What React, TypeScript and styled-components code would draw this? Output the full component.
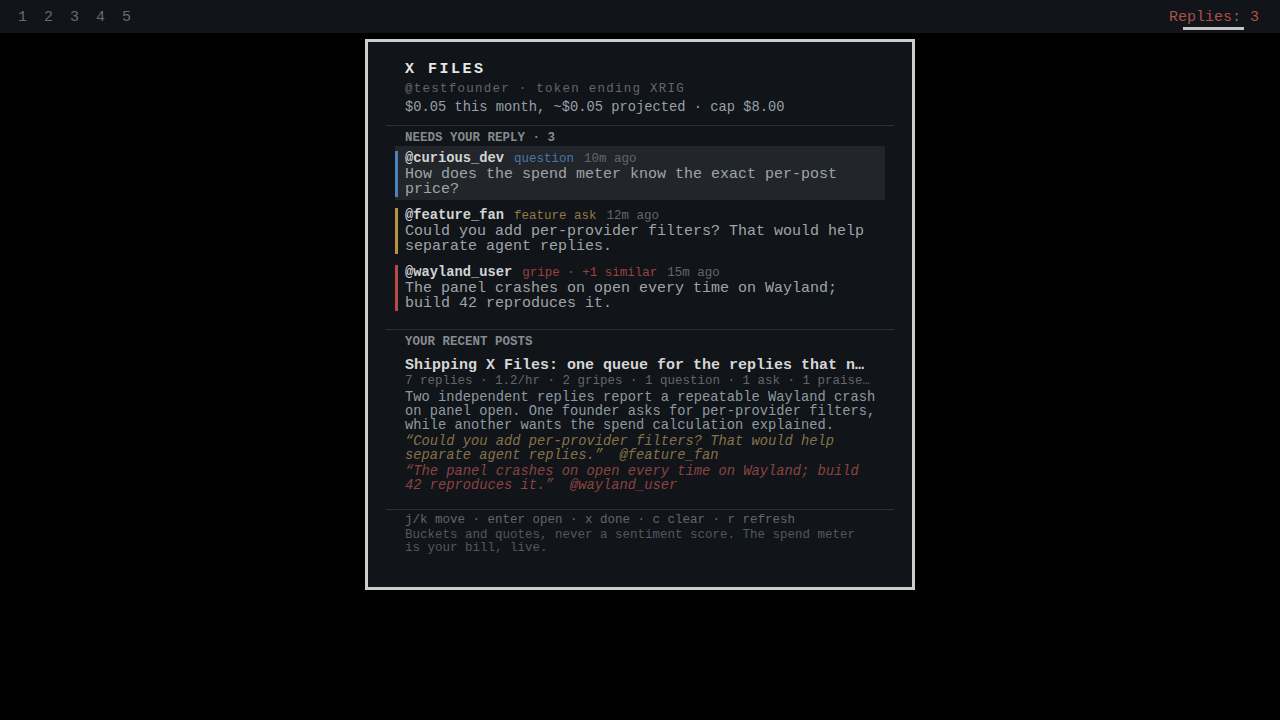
import styled, { createGlobalStyle } from 'styled-components';

type Kind = 'question' | 'ask' | 'gripe';

interface Reply {
  user: string
  kind: Kind
  tag: string
  extra?: string
  ago: string
  text: string
  active?: boolean
}

const kindColors: Record<Kind, { bar: string; tag: string }> = {
  question: { bar: '#4c82bd', tag: '#4a77a6' },
  ask: { bar: '#b8933c', tag: '#937b43' },
  gripe: { bar: '#b9484a', tag: '#9a423e' },
};

const replies: Reply[] = [
  {
    user: '@curious_dev',
    kind: 'question',
    tag: 'question',
    ago: '10m ago',
    text: 'How does the spend meter know the exact per-post price?',
    active: true,
  },
  {
    user: '@feature_fan',
    kind: 'ask',
    tag: 'feature ask',
    ago: '12m ago',
    text: 'Could you add per-provider filters? That would help separate agent replies.',
  },
  {
    user: '@wayland_user',
    kind: 'gripe',
    tag: 'gripe',
    extra: '+1 similar',
    ago: '15m ago',
    text: 'The panel crashes on open every time on Wayland; build 42 reproduces it.',
  },
];

const GlobalStyle = createGlobalStyle`
  html, body {
    margin: 0;
    padding: 0;
    background: #000;
  }
  body {
    font-family: "Liberation Mono", "Courier New", monospace;
  }
`;

function App() {
  return (
    <>
      <GlobalStyle />
      <Page>
        <TopBar>
          <Tabs>
            {[1, 2, 3, 4, 5].map(n => (
              <Tab key={n}>{n}</Tab>
            ))}
          </Tabs>
          <Counter>
            <CounterText>Replies: 3</CounterText>
            <Underline />
          </Counter>
        </TopBar>

        <Panel>
          <Header>
            <Title>X FILES</Title>
            <Handle>@testfounder · token ending XRIG</Handle>
            <Spend>$0.05 this month, ~$0.05 projected · cap $8.00</Spend>
          </Header>

          <Section $pb={15}>
            <SectionHead>NEEDS YOUR REPLY · 3</SectionHead>
            <CardList>
              {replies.map(r => (
                <Card key={r.user} $active={r.active}>
                  <CardInner $bar={kindColors[r.kind].bar}>
                    <Meta>
                      <User>{r.user}</User>
                      <Tag $color={kindColors[r.kind].tag}>
                        {r.tag}
                        {r.extra && (
                          <>
                            <Dot> · </Dot>
                            {r.extra}
                          </>
                        )}
                      </Tag>
                      <Ago>{r.ago}</Ago>
                    </Meta>
                    <Body>{r.text}</Body>
                  </CardInner>
                </Card>
              ))}
            </CardList>
          </Section>

          <Section $pb={12}>
            <SectionHead>YOUR RECENT POSTS</SectionHead>
            <Post>
              <PostTitle>Shipping X Files: one queue for the replies that n…</PostTitle>
              <Stats>7 replies · 1.2/hr · 2 gripes · 1 question · 1 ask · 1 praise…</Stats>
              <Summary>
                Two independent replies report a repeatable Wayland crash on panel open. One
                founder asks for per-provider filters, while another wants the spend calculation
                explained.
              </Summary>
              <Quote $color="#857348">
                {'“Could you add per-provider filters? That would help separate agent replies.”\u00a0\u00a0@feature_fan'}
              </Quote>
              <Quote $color="#8a4540">
                {'“The panel crashes on open every time on Wayland; build 42 reproduces it.”\u00a0\u00a0@wayland_user'}
              </Quote>
            </Post>
          </Section>

          <Footer>
            <Keys>j/k move · enter open · x done · c clear · r refresh</Keys>
            <Note>Buckets and quotes, never a sentiment score. The spend meter is your bill, live.</Note>
          </Footer>
        </Panel>
      </Page>
    </>
  );
}

export default App;

const Page = styled.div`
  width: 1280px;
  height: 720px;
  background: #000;
  font-family: "Liberation Mono", "Courier New", monospace;
`;

const TopBar = styled.div`
  height: 33px;
  box-sizing: border-box;
  background: #111418;
  display: flex;
  justify-content: space-between;
  align-items: flex-start;
  padding: 9.5px 21px 0 18px;
`;

const Tabs = styled.div`
  display: flex;
  gap: 17px;
`;

const Tab = styled.div`
  font-size: 15px;
  line-height: 15px;
  color: #666b72;
`;

const Counter = styled.div`
  display: flex;
  flex-direction: column;
  align-items: center;
  padding-left: 1px;
`;

const CounterText = styled.div`
  font-size: 15px;
  line-height: 15px;
  color: #ab504b;
`;

const Underline = styled.div`
  width: 61px;
  height: 3px;
  margin-top: 2.5px;
  background: #c4c4c4;
`;

const Panel = styled.div`
  box-sizing: border-box;
  width: 550px;
  height: 551px;
  margin: 6px auto 0;
  border: 3px solid #cdcdcd;
  background: #111418;
  padding: 0 18px;
`;

const Header = styled.div`
  padding: 19.5px 19px 10px;
`;

const Title = styled.div`
  font-size: 15px;
  line-height: 15px;
  font-weight: 700;
  letter-spacing: 2.5px;
  color: #e6e6e6;
`;

const Handle = styled.div`
  margin-top: 6px;
  font-size: 12.5px;
  line-height: 12.5px;
  letter-spacing: 1.25px;
  color: #62676c;
`;

const Spend = styled.div`
  margin-top: 6px;
  font-size: 13.75px;
  line-height: 13.75px;
  color: #97a0a9;
`;

const Section = styled.div<{ $pb: number }>`
  border-top: 1px solid #2b2f34;
  padding: 6px 18px ${p => p.$pb}px 19px;
`;

const SectionHead = styled.div`
  font-size: 12.5px;
  line-height: 12.5px;
  font-weight: 700;
  color: #868b90;
`;

const CardList = styled.div`
  margin: 1.5px -9px 0 -10px;
  display: flex;
  flex-direction: column;
  gap: 3px;
`;

const Card = styled.div<{ $active?: boolean }>`
  padding: 5px 10px 2.5px 0;
  background: ${p => (p.$active ? '#22262a' : 'transparent')};
`;

const CardInner = styled.div<{ $bar: string }>`
  border-left: 3px solid ${p => p.$bar};
  padding: 1px 0 0 7px;
`;

const Meta = styled.div`
  display: flex;
  align-items: baseline;
  gap: 10px;
  height: 13.75px;
  line-height: 13.75px;
`;

const User = styled.span`
  font-size: 13.75px;
  font-weight: 700;
  color: #d2d4d6;
`;

const Tag = styled.span<{ $color: string }>`
  font-size: 12.5px;
  color: ${p => p.$color};
  white-space: pre;
`;

const Dot = styled.span`
  color: #5a5f64;
`;

const Ago = styled.span`
  font-size: 12.5px;
  color: #62676c;
`;

const Body = styled.div`
  margin-top: 1.75px;
  font-size: 15px;
  line-height: 15px;
  color: #a0a4a8;
`;

const Post = styled.div`
  margin-top: 5px;
  padding: 5px 0 4px;
`;

const PostTitle = styled.div`
  font-size: 15px;
  line-height: 15px;
  font-weight: 700;
  color: #d6d6d6;
  white-space: nowrap;
  overflow: hidden;
`;

const Stats = styled.div`
  margin-top: 1.75px;
  font-size: 12.5px;
  line-height: 12.5px;
  color: #62676c;
  white-space: nowrap;
  overflow: hidden;
`;

const Summary = styled.div`
  margin-top: 3.5px;
  font-size: 13.75px;
  line-height: 14px;
  color: #8f99a2;
`;

const Quote = styled.div<{ $color: string }>`
  margin-top: 2px;
  font-size: 13.75px;
  line-height: 14px;
  font-style: italic;
  color: ${p => p.$color};
`;

const Footer = styled.div`
  border-top: 1px solid #2b2f34;
  padding: 3.75px 18px 0 19px;
`;

const Keys = styled.div`
  font-size: 12.5px;
  line-height: 12.5px;
  color: #62676c;
`;

const Note = styled.div`
  margin-top: 2.5px;
  font-size: 12.5px;
  line-height: 13px;
  color: #53585d;
`;
